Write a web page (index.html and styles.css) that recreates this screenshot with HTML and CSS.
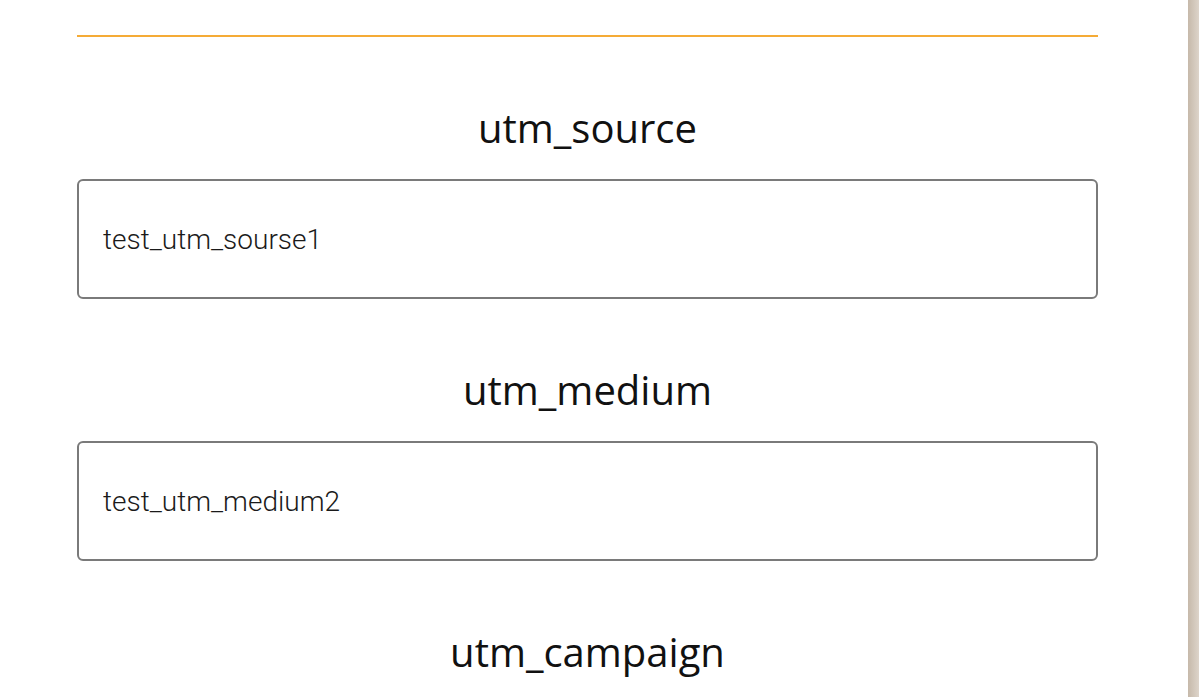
FILE: index.html
```html
<!DOCTYPE html>
<html lang="en">

<head>
    <meta charset="UTF-8">
    <meta name="viewport" content="width=device-width, initial-scale=1.0">
    <link rel="stylesheet" href="styles.css">
    <title>UTM</title>
</head>

<body>
    <div class="page">
        <main class="content">
            <hr class="divider">
            <div class="field">
                <h2 class="field-title">utm_source</h2>
                <input class="field-input" type="text" value="test_utm_sourse1">
            </div>
            <div class="field">
                <h2 class="field-title">utm_medium</h2>
                <input class="field-input" type="text" value="test_utm_medium2">
            </div>
            <div class="field">
                <h2 class="field-title">utm_campaign</h2>
                <input class="field-input" type="text" value="test_utm_campaign3">
            </div>
        </main>
        <div class="side"></div>
    </div>
</body>

</html>
```

FILE: styles.css
```css
html,
body {
    margin: 0;
    padding: 0;
    height: 100%;
    overflow: hidden;
    background: #fff;
}

body {
    font-family: 'Open Sans', sans-serif;
    color: #111;
}

.page {
    display: flex;
    height: 100%;
}

.content {
    flex: 1;
    padding: 35px 90px 0 77px;
}

.side {
    width: 11px;
    background: linear-gradient(to right, #c6b9aa, #ddd4ca);
}

.divider {
    margin: 0;
    border: 0;
    height: 2px;
    background: #f5ab36;
}

.field {
    display: flex;
    flex-direction: column;
}

.field-title {
    margin: 66px 0 26px;
    font-size: 40px;
    font-weight: 400;
    line-height: 50px;
    text-align: center;
}

.field-input {
    box-sizing: border-box;
    height: 120px;
    width: 100%;
    padding: 0 24px;
    border: 2px solid #7a7a7a;
    border-radius: 6px;
    font-family: 'Roboto', sans-serif;
    font-size: 28px;
    font-weight: 300;
    color: #1a1a1a;
    background: #fff;
    outline: none;
}
```
